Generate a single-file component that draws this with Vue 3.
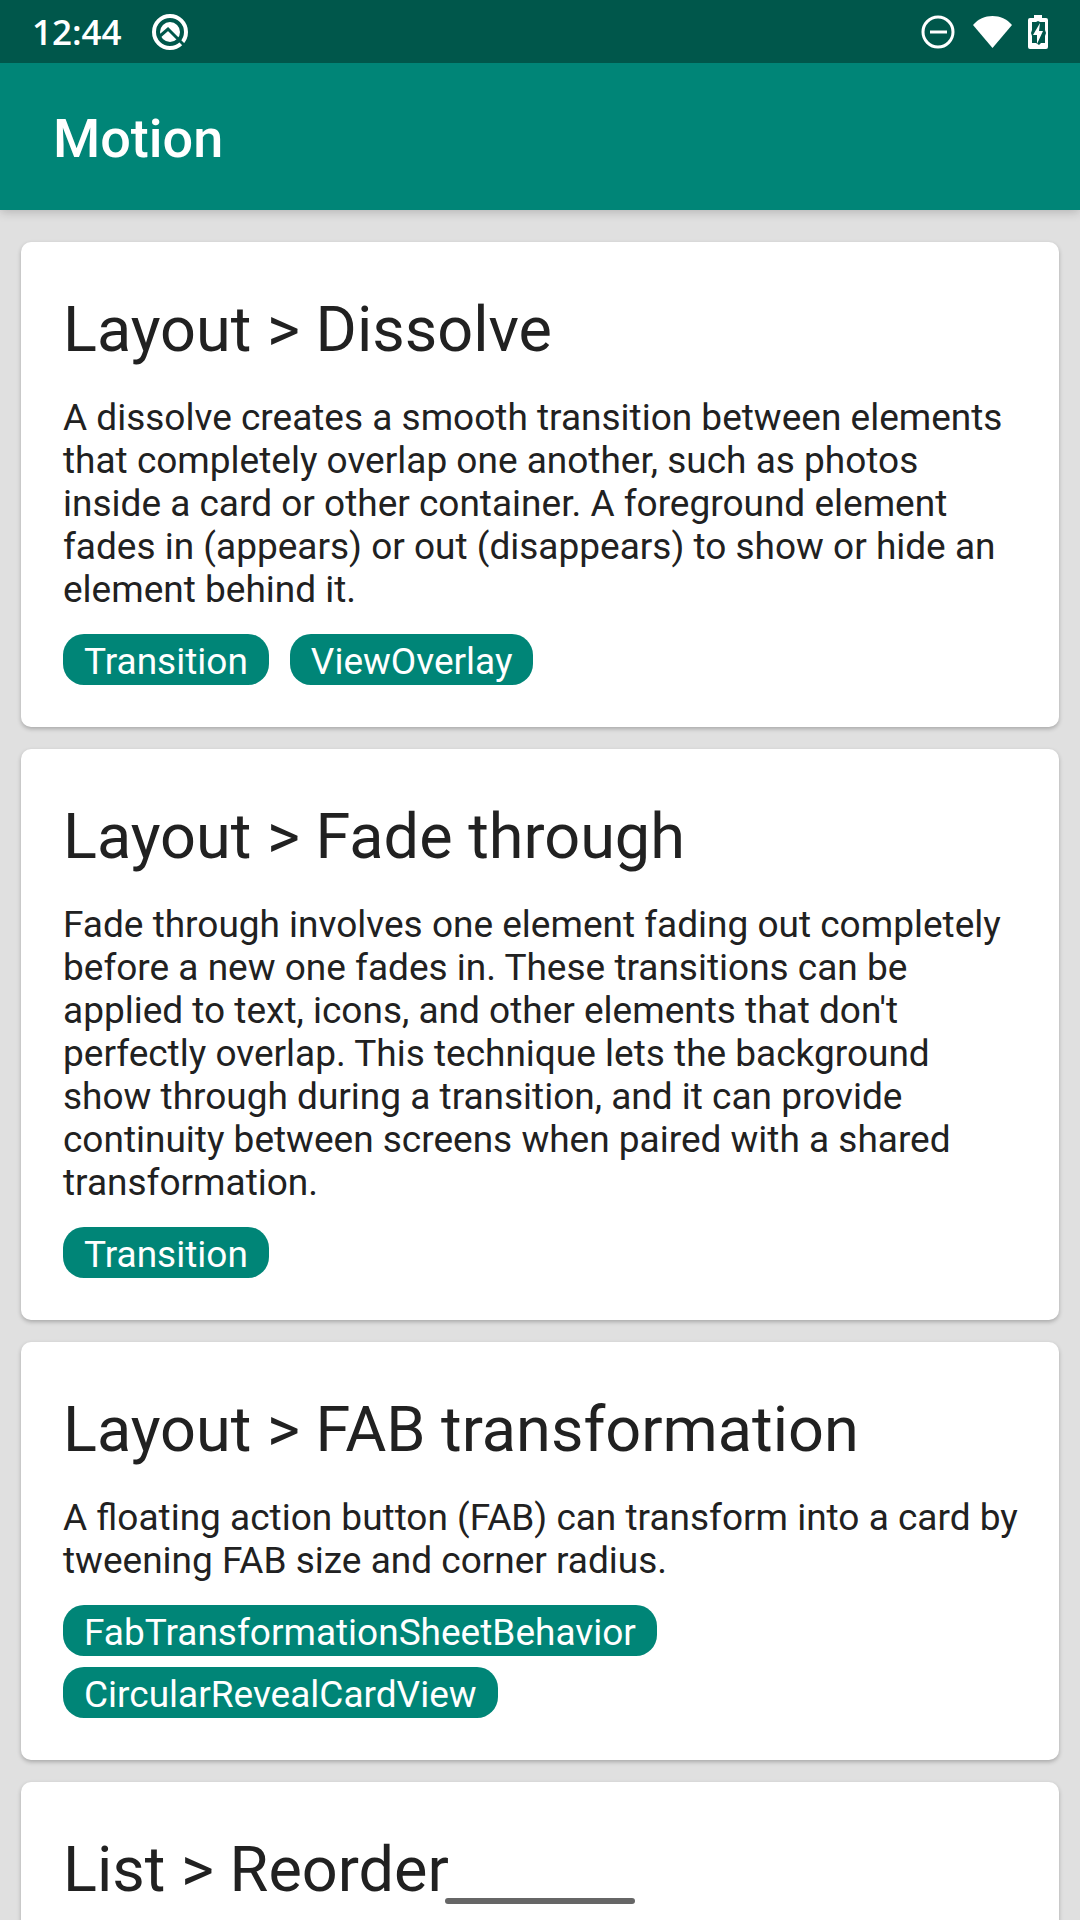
<script setup>
const cards = [
  {
    title: 'Layout > Dissolve',
    text: 'A dissolve creates a smooth transition between elements that completely overlap one another, such as photos inside a card or other container. A foreground element fades in (appears) or out (disappears) to show or hide an element behind it.',
    tags: ['Transition', 'ViewOverlay'],
  },
  {
    title: 'Layout > Fade through',
    text: "Fade through involves one element fading out completely before a new one fades in. These transitions can be applied to text, icons, and other elements that don't perfectly overlap. This technique lets the background show through during a transition, and it can provide continuity between screens when paired with a shared transformation.",
    tags: ['Transition'],
  },
  {
    title: 'Layout > FAB transformation',
    text: 'A floating action button (FAB) can transform into a card by tweening FAB size and corner radius.',
    tags: ['FabTransformationSheetBehavior', 'CircularRevealCardView'],
  },
  { title: 'List > Reorder', text: '', tags: [] },
]
</script>

<template>
  <div class="screen">
    <header class="top">
      <div class="status">
        <span class="time">12:44</span>
        <svg class="app-icon" width="38" height="38" viewBox="0 0 38 38" fill="none">
          <circle cx="19" cy="19" r="16" stroke="#fff" stroke-width="4" />
          <circle cx="19" cy="19" r="10" fill="#fff" />
          <path d="M9 23L17 16L34 33" stroke="#00574b" stroke-width="3" />
        </svg>
        <span class="spacer"></span>
        <svg width="34" height="34" viewBox="0 0 34 34" fill="none" stroke="#fff" stroke-width="3">
          <circle cx="17" cy="17" r="15" />
          <path d="M9 17h17" />
        </svg>
        <svg class="wifi" width="39" height="32" viewBox="0 0 39 32" fill="#fff">
          <path d="M19.500 32L0 9C5 3 12 0 19.500 0S34 3 39 9z" />
        </svg>
        <svg class="battery" width="20" height="34" viewBox="0 0 20 34">
          <path d="M6 0h8v3h4q2 0 2 2v27q0 2-2 2H2q-2 0-2-2V5q0-2 2-2h4z" fill="#fff" />
          <path d="M4 7h4l2-1 2 1h5v8l1 3-1 3v7h-4l-2 2-3-2H4v-7l-1-3 1-3z" fill="#00574b" />
          <path d="M12 8L5 20h4v9l6-13h-4z" fill="#fff" />
        </svg>
      </div>
      <div class="bar"><h1>Motion</h1></div>
    </header>
    <main class="list">
      <article v-for="card in cards" :key="card.title" class="card">
        <h2>{{ card.title }}</h2>
        <p v-if="card.text">{{ card.text }}</p>
        <div v-if="card.tags.length" class="tags">
          <span v-for="tag in card.tags" :key="tag" class="tag">{{ tag }}</span>
        </div>
      </article>
    </main>
    <div class="home"></div>
  </div>
</template>

<style>
body { overflow: hidden; }
</style>

<style scoped>
.screen {
  height: 100vh;
  overflow: hidden;
  background: #e0e0e0;
  font-family: Roboto, sans-serif;
  color: #212121;
}
.top { position: relative; box-shadow: 0 2px 10px rgba(0, 0, 0, 0.2); }
.status {
  display: flex;
  align-items: center;
  height: 63px;
  padding: 0 32px;
  background: #00574b;
  color: #fff;
}
.time { font-family: "Open Sans", sans-serif; font-size: 35px; font-weight: 600; }
.app-icon { margin-left: 29px; }
.spacer { flex: 1; }
.wifi { margin-left: 18px; }
.battery { margin-left: 16px; }
.bar {
  display: flex;
  align-items: center;
  height: 147px;
  padding: 4px 53px 0;
  box-sizing: border-box;
  background: #008577;
}
h1 { margin: 0; font-size: 54px; font-weight: 500; color: #fff; }
.list { display: flex; flex-direction: column; gap: 22px; padding: 32px 21px; }
.card {
  flex: none;
  padding: 42px 38px 42px 42px;
  border-radius: 10px;
  background: #fff;
  box-shadow: 0 2px 4px rgba(0, 0, 0, 0.25);
}
h2 { margin: 0; font-size: 63px; line-height: 92px; font-weight: 400; }
p { margin: 20px 0 0; font-size: 37px; line-height: 43px; }
.tags { display: flex; flex-wrap: wrap; gap: 11px 21px; margin-top: 23px; }
.tag {
  padding: 4px 21px 0;
  border-radius: 21px;
  background: #008577;
  color: #fff;
  font-size: 37px;
  line-height: 47px;
}
.home {
  position: absolute;
  left: 50%;
  bottom: 16px;
  width: 190px;
  height: 6px;
  margin-left: -95px;
  border-radius: 3px;
  background: #666;
}
</style>
